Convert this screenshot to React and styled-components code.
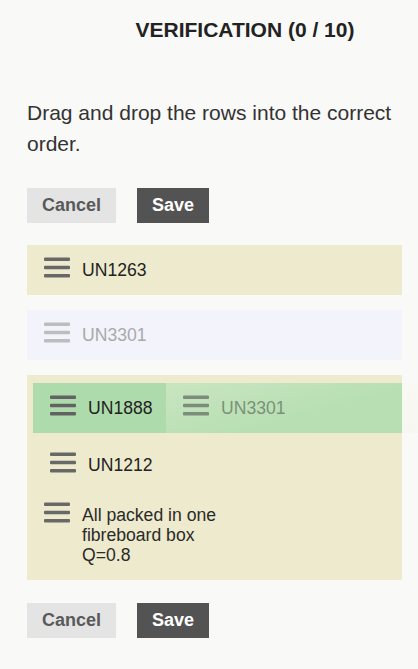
import React from "react";
import styled, { createGlobalStyle } from "styled-components";

const Global = createGlobalStyle`
  html, body {
    margin: 0;
    padding: 0;
    background: #f9f9f7;
    overflow: hidden;
    font-family: "Liberation Sans", Arial, sans-serif;
  }
`;

const Page = styled.div`
  padding: 0 16px 40px 27px;
  width: 418px;
  box-sizing: border-box;
  overflow: hidden;
`;

const Header = styled.h1`
  margin: 0;
  padding: 18px 0 0 72px;
  margin-left: -27px;
  margin-right: -16px;
  display: flex;
  justify-content: center;
  font-size: 21px;
  line-height: 24px;
  font-weight: 700;
  color: #222;
`;

const Intro = styled.p`
  margin: 55px 0 0;
  font-size: 21px;
  line-height: 31px;
  color: #333;
`;

const Actions = styled.div`
  display: flex;
  gap: 21px;
  margin-top: ${(p) => p.$top}px;
`;

const Button = styled.button`
  height: 35px;
  padding: 0 15px;
  border: none;
  border-radius: 0;
  font-family: inherit;
  font-size: 18px;
  font-weight: 700;
  line-height: 35px;
  background: ${(p) => (p.$primary ? "#535353" : "#e4e4e4")};
  color: ${(p) => (p.$primary ? "#ffffff" : "#595959")};
`;

const List = styled.div`
  display: flex;
  flex-direction: column;
  gap: 15px;
  margin-top: 22px;
`;

const Row = styled.div`
  position: relative;
  display: flex;
  align-items: flex-start;
  gap: 12px;
  padding: 15px 17px;
  min-height: 20px;
  background: ${(p) =>
    p.$variant === "placeholder"
      ? "#f3f3fb"
      : p.$variant === "active"
      ? "#aedbac"
      : p.$variant === "plain"
      ? "transparent"
      : "#eeeacd"};
  color: ${(p) => (p.$variant === "placeholder" ? "#a9a9a9" : "#222")};
`;

const Label = styled.span`
  font-size: 17.6px;
  line-height: 20px;
  max-width: 150px;
  color: ${(p) => p.$color || "inherit"};
`;

const Group = styled.div`
  background: #eeeacd;
  padding-top: 8px;
  display: flex;
  flex-direction: column;
`;

const Nested = styled.div`
  display: flex;
  flex-direction: column;
  gap: 7px;
  padding-left: 6px;
`;

const IconWrap = styled.span`
  display: block;
  flex: none;
  width: 26px;
  height: 21px;
  margin-top: -3px;
  color: ${(p) => p.$color};
`;

const Ghost = styled.div`
  position: absolute;
  top: 0;
  left: 133px;
  width: 375px;
  height: 50px;
  box-sizing: border-box;
  display: flex;
  align-items: flex-start;
  gap: 12px;
  padding: 15px 17px;
  background: linear-gradient(
    165deg,
    rgba(248, 248, 228, 0.36) 0%,
    rgba(248, 248, 228, 0.14) 45%,
    rgba(230, 225, 200, 0.16) 100%
  );
  color: #7a9278;
`;

const Handle = ({ color }) => (
  <IconWrap $color={color}>
    <svg width="26" height="21" viewBox="0 0 26 21" fill="currentColor">
      <rect x="0" y="0.5" width="26" height="3.6" rx="1" />
      <rect x="0" y="8.7" width="26" height="3.6" rx="1" />
      <rect x="0" y="17" width="26" height="3.6" rx="1" />
    </svg>
  </IconWrap>
);

const ActionBar = ({ top }) => (
  <Actions $top={top}>
    <Button>Cancel</Button>
    <Button $primary>Save</Button>
  </Actions>
);

export default function App() {
  return (
    <Page>
      <Global />
      <Header>VERIFICATION (0 / 10)</Header>
      <Intro>Drag and drop the rows into the correct order.</Intro>
      <ActionBar top={29} />
      <List>
        <Row>
          <Handle color="#686868" />
          <Label>UN1263</Label>
        </Row>
        <Row $variant="placeholder">
          <Handle color="#bdbdbd" />
          <Label>UN3301</Label>
        </Row>
        <Group>
          <Nested>
            <Row $variant="active">
              <Handle color="#626262" />
              <Label>UN1888</Label>
              <Ghost>
                <Handle color="#7d8d7b" />
                <Label>UN3301</Label>
              </Ghost>
            </Row>
            <Row $variant="plain">
              <Handle color="#686868" />
              <Label>UN1212</Label>
            </Row>
          </Nested>
          <Row $variant="plain">
            <Handle color="#686868" />
            <Label $color="#2a2a2a">All packed in one fibreboard box Q=0.8</Label>
          </Row>
        </Group>
      </List>
      <ActionBar top={23} />
    </Page>
  );
}
